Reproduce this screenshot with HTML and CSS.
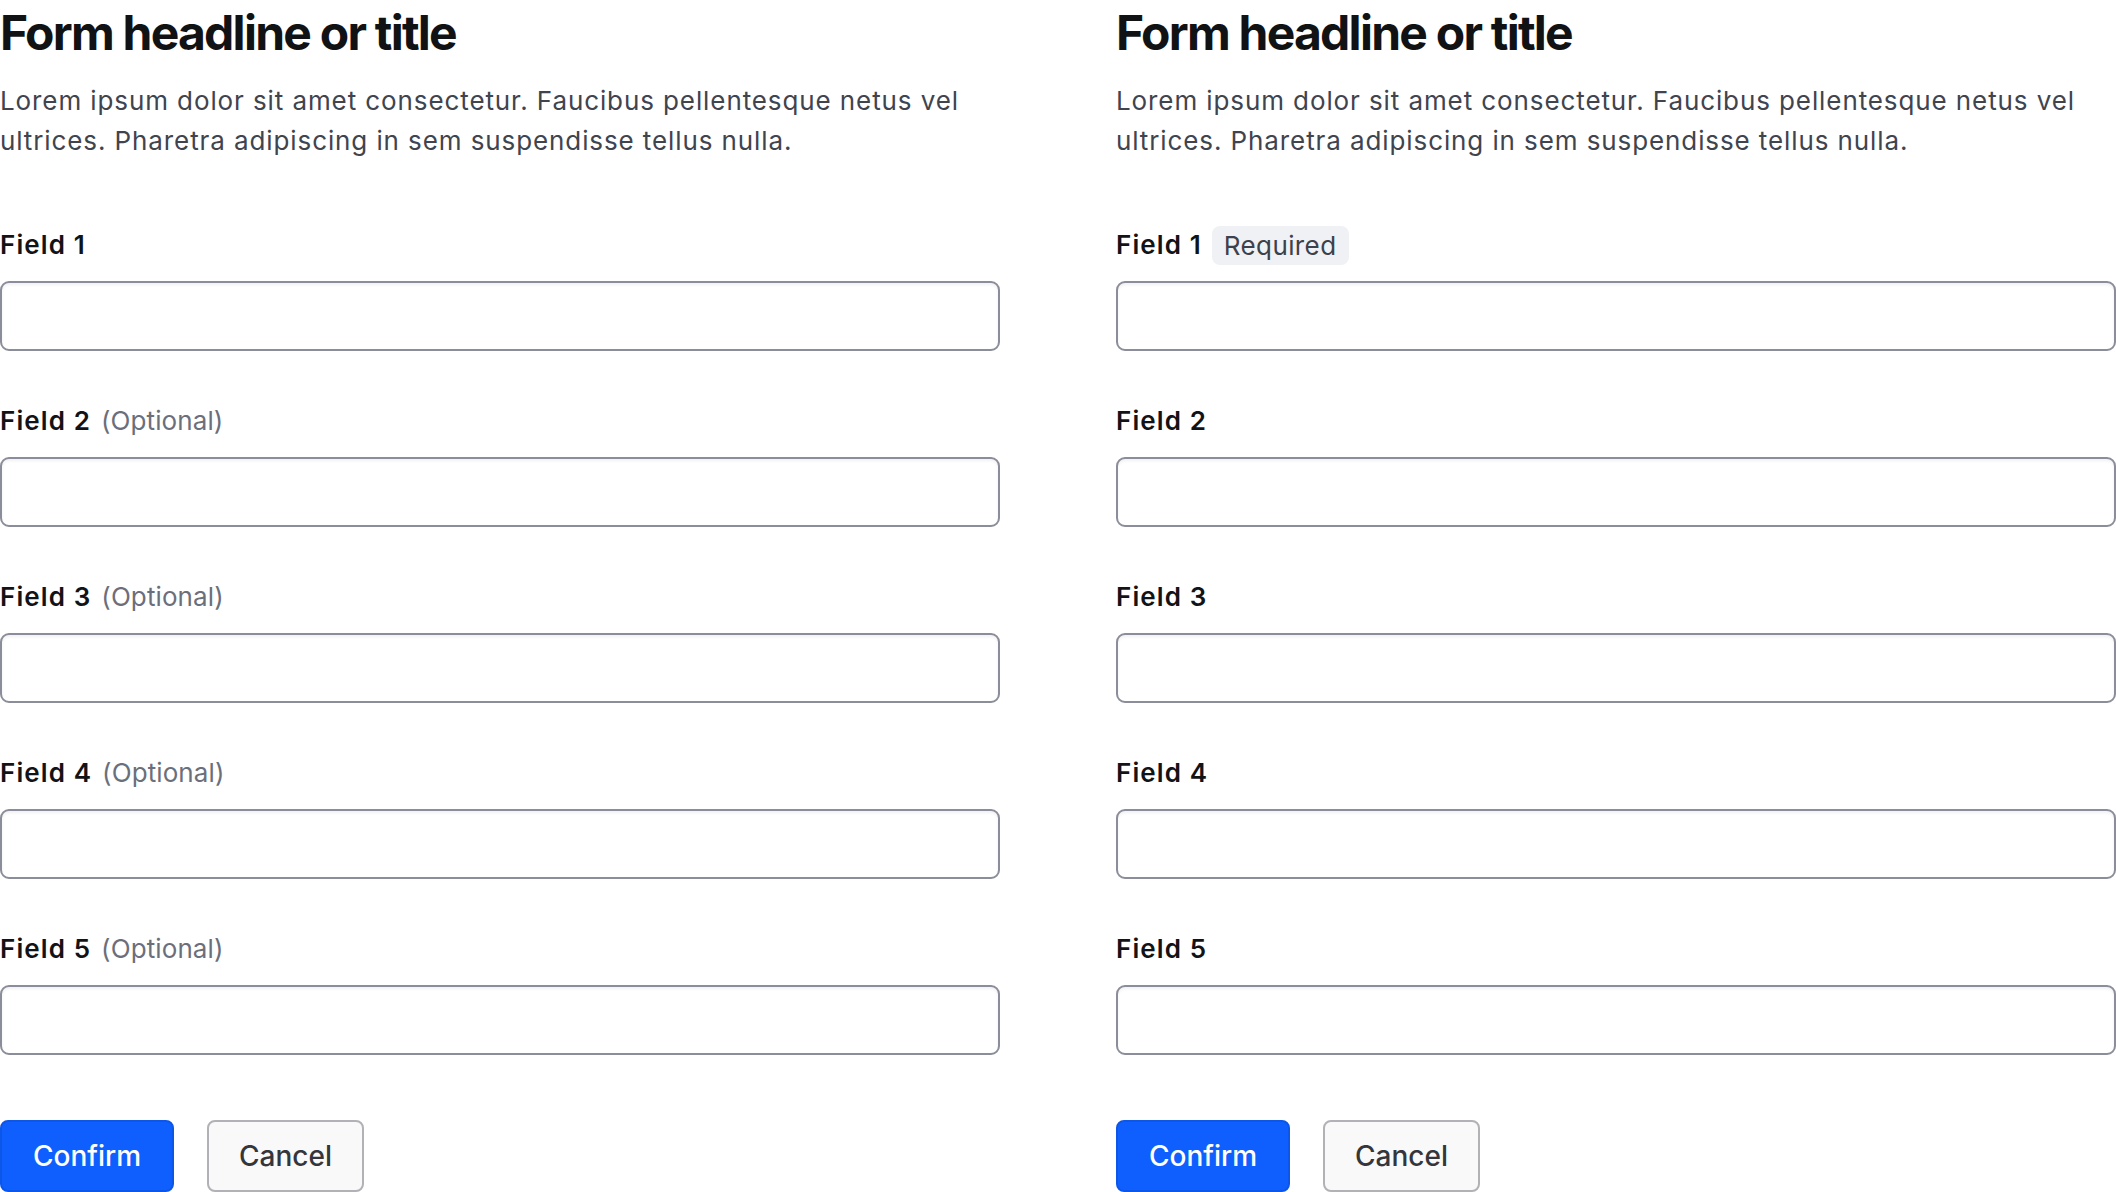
FILE: index.html
```html
<!DOCTYPE html>
<html lang="en">
<head>
<meta charset="utf-8">
<title>Forms</title>
<link rel="stylesheet" href="styles.css">
</head>
<body>
<main class="page">
  <form class="form">
    <h1 class="title">Form headline or title</h1>
    <p class="desc">Lorem ipsum dolor sit amet consectetur. Faucibus pellentesque netus vel ultrices. Pharetra adipiscing in sem suspendisse tellus nulla.</p>
    <div class="fields">
      <div class="field">
        <label class="label"><span class="name">Field 1</span></label>
        <input class="input" type="text">
      </div>
      <div class="field">
        <label class="label"><span class="name">Field 2</span><span class="optional">(Optional)</span></label>
        <input class="input" type="text">
      </div>
      <div class="field">
        <label class="label"><span class="name">Field 3</span><span class="optional">(Optional)</span></label>
        <input class="input" type="text">
      </div>
      <div class="field">
        <label class="label"><span class="name">Field 4</span><span class="optional">(Optional)</span></label>
        <input class="input" type="text">
      </div>
      <div class="field">
        <label class="label"><span class="name">Field 5</span><span class="optional">(Optional)</span></label>
        <input class="input" type="text">
      </div>
    </div>
    <div class="actions">
      <button type="button" class="btn btn-primary">Confirm</button>
      <button type="button" class="btn btn-secondary">Cancel</button>
    </div>
  </form>
  <form class="form">
    <h1 class="title">Form headline or title</h1>
    <p class="desc">Lorem ipsum dolor sit amet consectetur. Faucibus pellentesque netus vel ultrices. Pharetra adipiscing in sem suspendisse tellus nulla.</p>
    <div class="fields">
      <div class="field">
        <label class="label"><span class="name">Field 1</span><span class="badge">Required</span></label>
        <input class="input" type="text">
      </div>
      <div class="field">
        <label class="label"><span class="name">Field 2</span></label>
        <input class="input" type="text">
      </div>
      <div class="field">
        <label class="label"><span class="name">Field 3</span></label>
        <input class="input" type="text">
      </div>
      <div class="field">
        <label class="label"><span class="name">Field 4</span></label>
        <input class="input" type="text">
      </div>
      <div class="field">
        <label class="label"><span class="name">Field 5</span></label>
        <input class="input" type="text">
      </div>
    </div>
    <div class="actions">
      <button type="button" class="btn btn-primary">Confirm</button>
      <button type="button" class="btn btn-secondary">Cancel</button>
    </div>
  </form>
</main>
</body>
</html>
```
FILE: styles.css
```css
* { box-sizing: border-box; }
html, body {
  margin: 0;
  padding: 0;
  background: #ffffff;
  font-family: Inter, "Noto Sans", "Liberation Sans", sans-serif;
  color: #121316;
}
.page {
  display: flex;
  gap: 116px;
  width: 2116px;
  height: 1192px;
  overflow: hidden;
}
.form {
  width: 1000px;
  flex: 0 0 1000px;
  display: flex;
  flex-direction: column;
  margin: 0;
}
.title {
  margin: 5px 0 0;
  font-size: 48px;
  line-height: 56px;
  font-weight: 700;
  letter-spacing: -1.75px;
  color: #111214;
}
.desc {
  margin: 20px 0 0;
  font-size: 26px;
  line-height: 40px;
  font-weight: 400;
  letter-spacing: 0.9px;
  color: #40444e;
}
.fields {
  display: flex;
  flex-direction: column;
  gap: 50px;
  margin-top: 64px;
}
.field {
  display: flex;
  flex-direction: column;
  gap: 16px;
}
.label {
  display: flex;
  align-items: center;
  gap: 10px;
  height: 40px;
  font-size: 26px;
  line-height: 40px;
}
.name {
  font-weight: 600;
  letter-spacing: 1.1px;
  color: #121316;
}
.optional {
  font-weight: 400;
  letter-spacing: 0.1px;
  color: #6b6f7b;
}
.badge {
  font-weight: 400;
  letter-spacing: 0.4px;
  color: #3d414b;
  background: #f0f1f4;
  border-radius: 8px;
  padding: 0 12px;
  height: 39px;
  line-height: 39px;
}
.input {
  display: block;
  width: 100%;
  height: 70px;
  margin: 0;
  border: 2px solid #8b8e9a;
  border-radius: 9px;
  background: #fff;
  box-shadow: inset 0 2px 3px rgba(0, 0, 0, 0.06);
  font: inherit;
}
.actions {
  display: flex;
  gap: 33px;
  margin-top: 65px;
}
.btn {
  height: 72px;
  border-radius: 8px;
  font-family: inherit;
  font-size: 28px;
  font-weight: 500;
  cursor: pointer;
  padding: 0;
}
.btn-primary {
  width: 174px;
  background: #0f5fff;
  border: 2px solid #0d57e8;
  color: #ffffff;
}
.btn-secondary {
  width: 157px;
  background: #f9f9f9;
  border: 2px solid #b1b1b6;
  color: #34363c;
}
```
